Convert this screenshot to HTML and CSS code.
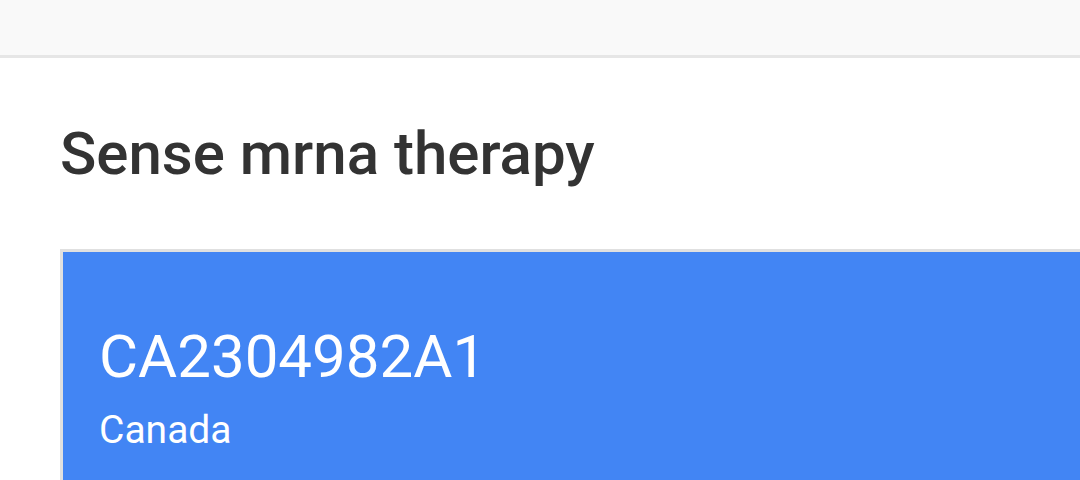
FILE: index.html
```html
<!DOCTYPE html>
<html lang="en">
<head>
  <meta charset="UTF-8" />
  <meta name="viewport" content="width=device-width, initial-scale=1.0"/>
  <title>Sense mrna therapy</title>
  <link rel="stylesheet" href="styles.css">
</head>
<body>

  <!-- BARRA DO TOPO -->
  <header class="topo"></header>

  <main class="conteudo">
    <h1 class="titulo">Sense mrna therapy</h1>

    <div class="cartao">
      <div class="numero">CA2304982A1</div>
      <div class="pais">Canada</div>
    </div>
  </main>

</body>
</html>
```

FILE: styles.css
```css
body {
  margin: 0;
  font-family: Roboto, "Liberation Sans", sans-serif;
  background: #ffffff;
  color: #333333;
  overflow: hidden;
}

.topo {
  height: 55px;
  background: #f9f9f9;
  border-bottom: 3px solid #e6e6e6;
}

.conteudo {
  padding: 0 0 0 60px;
}

.titulo {
  margin: 0;
  padding-top: 60px;
  font-size: 60px;
  font-weight: 500;
  line-height: 72px;
  color: #333333;
}

.cartao {
  margin-top: 59px;
  background: #4285f4;
  border-top: 3px solid #e0e0e0;
  border-left: 3px solid #e0e0e0;
  padding: 71px 0 30px 36px;
  color: #ffffff;
  min-height: 300px;
}

.numero {
  font-size: 60px;
  line-height: 68px;
}

.pais {
  font-size: 39px;
  line-height: 46px;
  margin-top: 16px;
}
```
